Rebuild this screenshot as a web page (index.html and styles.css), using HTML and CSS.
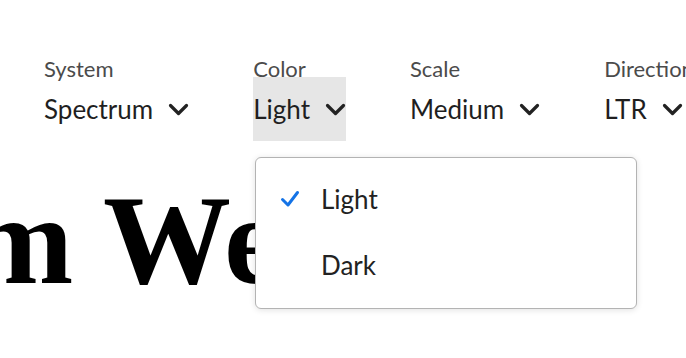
FILE: index.html
```html
<!DOCTYPE html>
<html lang="en">
<head>
<meta charset="utf-8">
<title>Spectrum Web Components</title>
<link rel="stylesheet" href="styles.css">
</head>
<body>
  <div class="toolbar">
    <div class="field">
      <span class="label">System</span>
      <button class="picker"><span class="value">Spectrum</span><svg class="chev" viewBox="0 0 21 13" width="21" height="13"><polyline points="2.5,2.5 10.5,10.5 18.5,2.5"/></svg></button>
    </div>
    <div class="field">
      <span class="label">Color</span>
      <button class="picker is-open"><span class="value">Light</span><svg class="chev" viewBox="0 0 21 13" width="21" height="13"><polyline points="2.5,2.5 10.5,10.5 18.5,2.5"/></svg></button>
    </div>
    <div class="field">
      <span class="label">Scale</span>
      <button class="picker"><span class="value">Medium</span><svg class="chev" viewBox="0 0 21 13" width="21" height="13"><polyline points="2.5,2.5 10.5,10.5 18.5,2.5"/></svg></button>
    </div>
    <div class="field">
      <span class="label">Direction</span>
      <button class="picker"><span class="value">LTR</span><svg class="chev" viewBox="0 0 21 13" width="21" height="13"><polyline points="2.5,2.5 10.5,10.5 18.5,2.5"/></svg></button>
    </div>
  </div>
  <h1 class="title">Spectrum Web Components</h1>
  <div class="menu" role="listbox">
    <div class="item selected"><svg class="check" viewBox="0 0 20 18" width="20" height="18"><polyline points="2.5,9.5 8,15 17.5,2.5"/></svg><span>Light</span></div>
    <div class="item"><span class="check-space"></span><span>Dark</span></div>
  </div>
</body>
</html>
```
FILE: styles.css
```css
html, body {
  margin: 0;
  padding: 0;
  overflow: hidden;
  background: #fff;
}
body {
  font-family: Lato, "Open Sans", sans-serif;
  color: #222;
  width: 686px;
  height: 358px;
  position: relative;
}
.toolbar {
  display: flex;
  gap: 64px;
  padding: 60px 0 0 44px;
  white-space: nowrap;
}
.field {
  display: flex;
  flex-direction: column;
  align-items: flex-start;
}
.label {
  font-size: 22px;
  line-height: 17px;
  color: #4b4b4b;
}
.picker {
  display: flex;
  align-items: center;
  gap: 15px;
  height: 64px;
  padding: 0;
  border: 0;
  background: transparent;
  font: inherit;
  color: #1f1f1f;
}
.picker.is-open {
  background: #e6e6e6;
}
.value {
  font-size: 26px;
  line-height: 32px;
}
.chev {
  fill: none;
  stroke: #222;
  stroke-width: 3.2;
  stroke-linecap: round;
  stroke-linejoin: round;
}
.title {
  margin: 16px 0 0 -460px;
  font-family: "Liberation Serif", "Times New Roman", serif;
  font-weight: bold;
  font-size: 128px;
  line-height: 1.3;
  color: #000;
}
.menu {
  position: absolute;
  left: 255px;
  top: 157px;
  width: 380px;
  height: 142px;
  padding-top: 8px;
  background: #fff;
  border: 1px solid #b3b3b3;
  border-radius: 6px;
  box-shadow: 0 1px 6px rgba(0, 0, 0, 0.12);
}
.item {
  display: flex;
  align-items: center;
  gap: 21px;
  height: 66px;
  padding-left: 24px;
  font-size: 26px;
  color: #222;
}
.check, .check-space {
  width: 20px;
  height: 18px;
  flex: none;
}
.check {
  fill: none;
  stroke: #1473e6;
  stroke-width: 3;
  stroke-linecap: round;
  stroke-linejoin: round;
}
```
